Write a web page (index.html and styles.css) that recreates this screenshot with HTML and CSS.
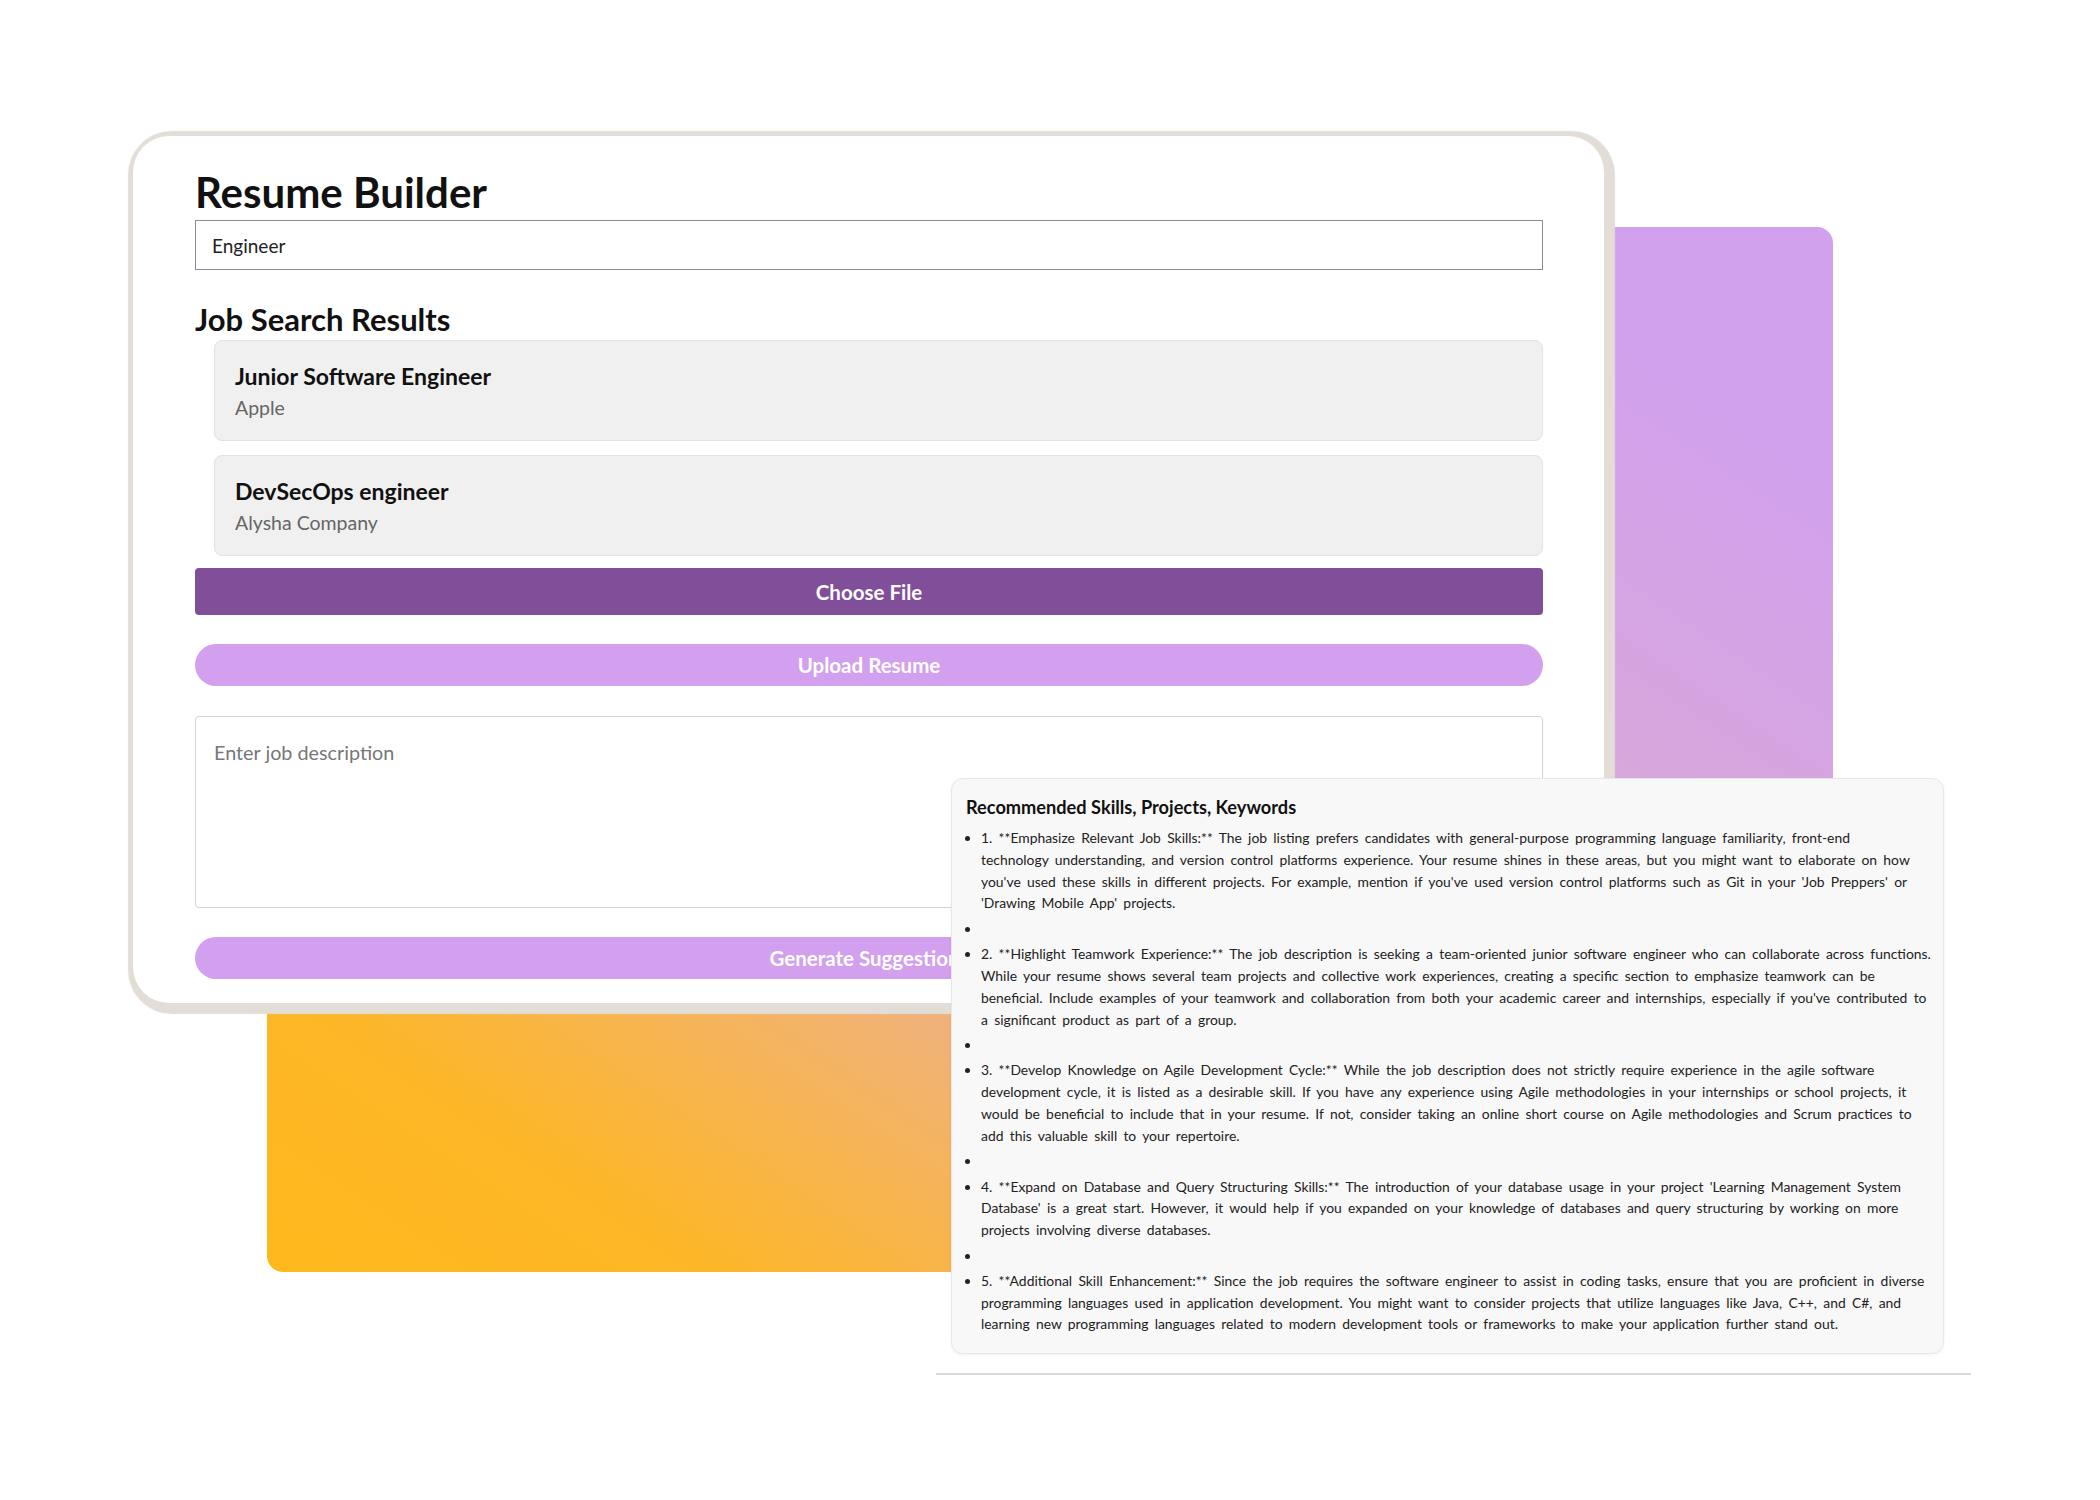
FILE: index.html
```html
<!DOCTYPE html>
<html lang="en">
<head>
    <meta charset="UTF-8">
    <meta name="viewport" content="width=device-width, initial-scale=1.0">
    <title>Resume Builder</title>
    <link rel="stylesheet" href="styles.css">
</head>
<body>
    <div class="stage">
        <!-- coloured block behind the two screenshots -->
        <div class="backdrop"></div>

        <main class="builder">
            <h1>Resume Builder</h1>
            <input type="text" class="search" value="Engineer">

            <h2>Job Search Results</h2>
            <div class="job-list">
                <div class="job">
                    <h3>Junior Software Engineer</h3>
                    <p>Apple</p>
                </div>
                <div class="job">
                    <h3>DevSecOps engineer</h3>
                    <p>Alysha Company</p>
                </div>
            </div>

            <button class="btn-file">Choose File</button>
            <button class="btn-soft upload">Upload Resume</button>
            <textarea class="description" placeholder="Enter job description"></textarea>
            <button class="btn-soft generate">Generate Suggestions</button>
        </main>

        <section class="suggestions">
            <h4>Recommended Skills, Projects, Keywords</h4>
            <ul>
                <li>1. **Emphasize Relevant Job Skills:** The job listing prefers candidates with general-purpose programming language familiarity, front-end technology understanding, and version control platforms experience. Your resume shines in these areas, but you might want to elaborate on how you've used these skills in different projects. For example, mention if you've used version control platforms such as Git in your 'Job Preppers' or 'Drawing Mobile App' projects.</li>
                <li>&nbsp;</li>
                <li>2. **Highlight Teamwork Experience:** The job description is seeking a team-oriented junior software engineer who can collaborate across functions. While your resume shows several team projects and collective work experiences, creating a specific section to emphasize teamwork can be beneficial. Include examples of your teamwork and collaboration from both your academic career and internships, especially if you've contributed to a significant product as part of a group.</li>
                <li>&nbsp;</li>
                <li>3. **Develop Knowledge on Agile Development Cycle:** While the job description does not strictly require experience in the agile software development cycle, it is listed as a desirable skill. If you have any experience using Agile methodologies in your internships or school projects, it would be beneficial to include that in your resume. If not, consider taking an online short course on Agile methodologies and Scrum practices to add this valuable skill to your repertoire.</li>
                <li>&nbsp;</li>
                <li>4. **Expand on Database and Query Structuring Skills:** The introduction of your database usage in your project 'Learning Management System Database' is a great start. However, it would help if you expanded on your knowledge of databases and query structuring by working on more projects involving diverse databases.</li>
                <li>&nbsp;</li>
                <li>5. **Additional Skill Enhancement:** Since the job requires the software engineer to assist in coding tasks, ensure that you are proficient in diverse programming languages used in application development. You might want to consider projects that utilize languages like Java, C++, and C#, and learning new programming languages related to modern development tools or frameworks to make your application further stand out.</li>
            </ul>
        </section>

        <div class="divider"></div>
    </div>
</body>
</html>
```

FILE: styles.css
```css
/* Resume builder showcase */
body {
    font-family: "Lato", "Open Sans", sans-serif;
    margin: 0;
    background: #fff;
    color: #111;
}
.stage {
    position: relative;
    width: 2100px;
    height: 1500px;
    overflow: hidden;
}
.backdrop {
    position: absolute;
    left: 267px;
    top: 227px;
    width: 1566px;
    height: 1045px;
    border-radius: 16px;
    background: linear-gradient(to top right, #ffb81c 0%, #fdb626 14%, #f0b27d 34%, #d8a7d8 64%, #d2a1ee 88%);
}

/* main card */
.builder {
    position: absolute;
    left: 133px;
    top: 136px;
    width: 1471px;
    height: 867px;
    box-sizing: border-box;
    padding: 31px 61px 0 62px;
    background: #fff;
    border-radius: 36px;
    box-shadow: 3px 3px 1px 8px #e2ddd6;
}
.builder h1 {
    font-size: 42px;
    line-height: 50px;
    font-weight: 700;
    margin: 0 0 3px;
}
.search {
    display: block;
    width: 100%;
    height: 50px;
    box-sizing: border-box;
    padding: 0 16px;
    border: 1px solid #868b97;
    font-family: inherit;
    font-size: 19px;
    color: #222;
    background: #fff;
}
.builder h2 {
    font-size: 31px;
    line-height: 38px;
    font-weight: 700;
    margin: 30px 0 2px;
}
.job-list {
    padding-left: 19px;
}
.job {
    background: #f0f0f0;
    border: 1px solid #e2e2e2;
    border-radius: 8px;
    height: 101px;
    box-sizing: border-box;
    padding: 20px 20px 0 20px;
}
.job + .job {
    margin-top: 14px;
}
.job h3 {
    font-size: 23px;
    line-height: 31px;
    margin: 0 0 2px;
    color: #111;
}
.job p {
    font-size: 19.5px;
    line-height: 27px;
    margin: 0;
    color: #666;
}
button {
    display: block;
    width: 100%;
    border: none;
    color: #fff;
    font-family: inherit;
    font-size: 20.5px;
    font-weight: 700;
    cursor: pointer;
}
.btn-file {
    height: 47px;
    margin-top: 12px;
    background-color: #814e9a;
    border-radius: 4px;
}
.btn-soft {
    height: 42px;
    background-color: #d2a0ee;
    border-radius: 21px;
}
.upload {
    margin-top: 29px;
}
.description {
    display: block;
    width: 100%;
    height: 192px;
    margin-top: 30px;
    box-sizing: border-box;
    padding: 23px 18px;
    border: 1px solid #d2d2d2;
    border-radius: 4px;
    font-family: inherit;
    font-size: 19.8px;
    line-height: 24px;
    resize: none;
}
.description::placeholder {
    color: #777;
}
.generate {
    margin-top: 29px;
}

/* suggestions panel */
.suggestions {
    position: absolute;
    left: 951px;
    top: 778px;
    width: 993px;
    height: 576px;
    box-sizing: border-box;
    padding: 17px 11px 0 14px;
    background: #f8f8f8;
    border: 1px solid #e8e8e8;
    border-radius: 12px;
    box-shadow: 0 1px 3px rgba(0, 0, 0, 0.06);
}
.suggestions h4 {
    font-size: 18.2px;
    line-height: 22px;
    font-weight: 700;
    margin: 0 0 9px;
}
.suggestions ul {
    margin: 0;
    padding-left: 15px;
}
.suggestions li {
    font-size: 13.9px;
    line-height: 21.8px;
    word-spacing: 2.7px;
    margin-bottom: 3.6px;
    color: #222;
}
.suggestions li:first-child {
    padding-right: 17px;
}
.divider {
    position: absolute;
    left: 936px;
    top: 1373px;
    width: 1035px;
    height: 2px;
    background: #dcd8d3;
}
```
